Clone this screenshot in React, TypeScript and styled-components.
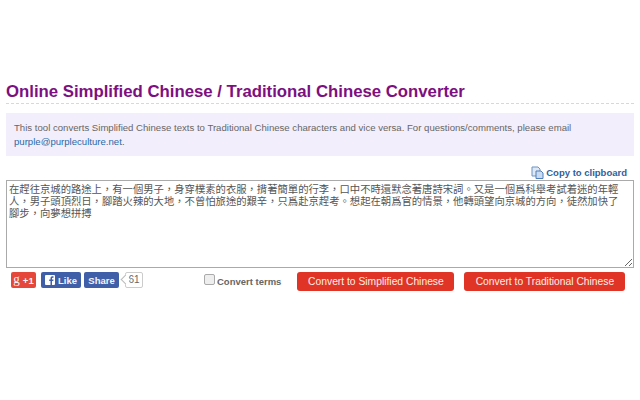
import { createGlobalStyle } from "styled-components";
import styled from "styled-components";

const Global = createGlobalStyle`
  html, body {
    margin: 0;
    padding: 0;
    background: #fff;
    font-family: "Liberation Sans", Arial, sans-serif;
  }
`;

const Page = styled.div`
  width: 640px;
  height: 400px;
  padding: 81px 6px 0;
  box-sizing: border-box;
  overflow: hidden;
`;

const Title = styled.h1`
  margin: 0;
  height: 22px;
  line-height: 22px;
  font-size: 16.75px;
  font-weight: bold;
  color: #7d0f80;
  border-bottom: 1px dashed #d8d8d8;
`;

const Info = styled.div`
  margin-top: 9px;
  height: 43px;
  padding: 8px 9px 0 8px;
  box-sizing: border-box;
  background: #f3eefb;
  font-size: 9.6px;
  line-height: 14px;
  color: #666;

  a {
    color: #2a6aa8;
    text-decoration: none;
  }
`;

const CopyRow = styled.div`
  display: flex;
  justify-content: flex-end;
  align-items: center;
  gap: 2px;
  height: 24px;
  padding: 8px 7px 0 0;
  box-sizing: border-box;
  font-size: 9.5px;
  font-weight: bold;
  color: #2f5f9e;
`;

const Source = styled.textarea`
  display: block;
  width: 628px;
  height: 88px;
  margin: 0;
  padding: 2px 10px 2px 2px;
  box-sizing: border-box;
  border: 1px solid #aaa;
  font-family: "Noto Sans CJK TC", sans-serif;
  font-size: 10.33px;
  line-height: 12px;
  color: #555;
  outline: none;
`;

const Actions = styled.div`
  display: flex;
  align-items: flex-start;
  margin-top: 4px;
  padding-left: 5px;
`;

const Social = styled.a<{ $bg: string; $width: number; $gap: number }>`
  display: flex;
  align-items: center;
  justify-content: center;
  gap: 3px;
  width: ${(p) => p.$width}px;
  height: 16px;
  margin-right: ${(p) => p.$gap}px;
  border-radius: 2px;
  background: ${(p) => p.$bg};
  color: #f2f4fa;
  font-size: 9.5px;
  font-weight: bold;
`;

const GlyphG = styled.span`
  font-family: "Liberation Serif", serif;
  font-size: 13px;
  font-weight: normal;
  margin-top: -2px;
`;

const Count = styled.span`
  position: relative;
  height: 14px;
  width: 16px;
  margin-left: 1px;
  border: 1px solid #ccc;
  border-radius: 2px;
  color: #666;
  font-size: 10px;
  line-height: 14px;
  text-align: center;

  &::before {
    content: "";
    position: absolute;
    left: -4px;
    top: 3px;
    width: 6px;
    height: 6px;
    background: #fff;
    border-left: 1px solid #bbb;
    border-bottom: 1px solid #bbb;
    transform: rotate(45deg);
  }
`;

const Terms = styled.label`
  display: flex;
  align-items: center;
  gap: 2px;
  height: 18px;
  margin-left: 61px;
  font-size: 9.5px;
  font-weight: bold;
  color: #666;
`;

const Check = styled.span`
  width: 9px;
  height: 9px;
  margin-top: -3px;
  border: 1px solid #aaa;
  border-radius: 2px;
  background: #eee;
`;

const Convert = styled.button<{ $width: number; $gap: number }>`
  width: ${(p) => p.$width}px;
  height: 19px;
  margin: 0 0 0 ${(p) => p.$gap}px;
  padding: 0;
  border: 0;
  border-radius: 3px;
  background: #e03426;
  color: #fdeee6;
  font-family: "Liberation Sans", Arial, sans-serif;
  font-size: 10.3px;
`;

const text =
  "在趕往京城的路途上，有一個男子，身穿樸素的衣服，揹著簡單的行李，口中不時還默念著唐詩宋詞。又是一個爲科舉考試着迷的年輕人，男子頭頂烈日，腳踏火辣的大地，不曾怕旅途的艱辛，只爲赴京趕考。想起在朝爲官的情景，他轉頭望向京城的方向，徒然加快了腳步，向夢想拼搏";

export default function App() {
  return (
    <Page>
      <Global />
      <Title>Online Simplified Chinese / Traditional Chinese Converter</Title>
      <Info>
        This tool converts Simplified Chinese texts to Traditional Chinese characters and vice versa. For questions/comments, please email{" "}
        <a href="#">purple@purpleculture.net</a>.
      </Info>
      <CopyRow>
        <svg width="13" height="13" viewBox="0 0 13 13">
          <path d="M1 1h6l2 2v7H1z" fill="#dfe9f6" stroke="#6d93c4" />
          <path d="M5 5h5l2 2v5.500H5z" fill="#c9dbf1" stroke="#4f7fb9" />
        </svg>
        Copy to clipboard
      </CopyRow>
      <Source defaultValue={text} />
      <Actions>
        <Social $bg="#e5483a" $width={25} $gap={5}>
          <GlyphG>g</GlyphG>+1
        </Social>
        <Social $bg="#3f5fa8" $width={40} $gap={3}>
          <svg width="10" height="10" viewBox="0 0 10 10">
            <rect width="10" height="10" rx="1" fill="#fff" />
            <path d="M7 10V6h1.300l.2-1.500H7v-1c0-.5.2-.8.8-.8h.7V1.300C8.300 1.300 7.900 1.200 7.400 1.200 6.200 1.200 5.500 2 5.500 3.200v1.300H4.200V6h1.300v4z" fill="#3f5fa8" />
          </svg>
          Like
        </Social>
        <Social $bg="#3f5fa8" $width={35} $gap={5}>Share</Social>
        <Count>61</Count>
        <Terms>
          <Check />
          Convert terms
        </Terms>
        <Convert $width={157} $gap={16}>Convert to Simplified Chinese</Convert>
        <Convert $width={161} $gap={10}>Convert to Traditional Chinese</Convert>
      </Actions>
    </Page>
  );
}
